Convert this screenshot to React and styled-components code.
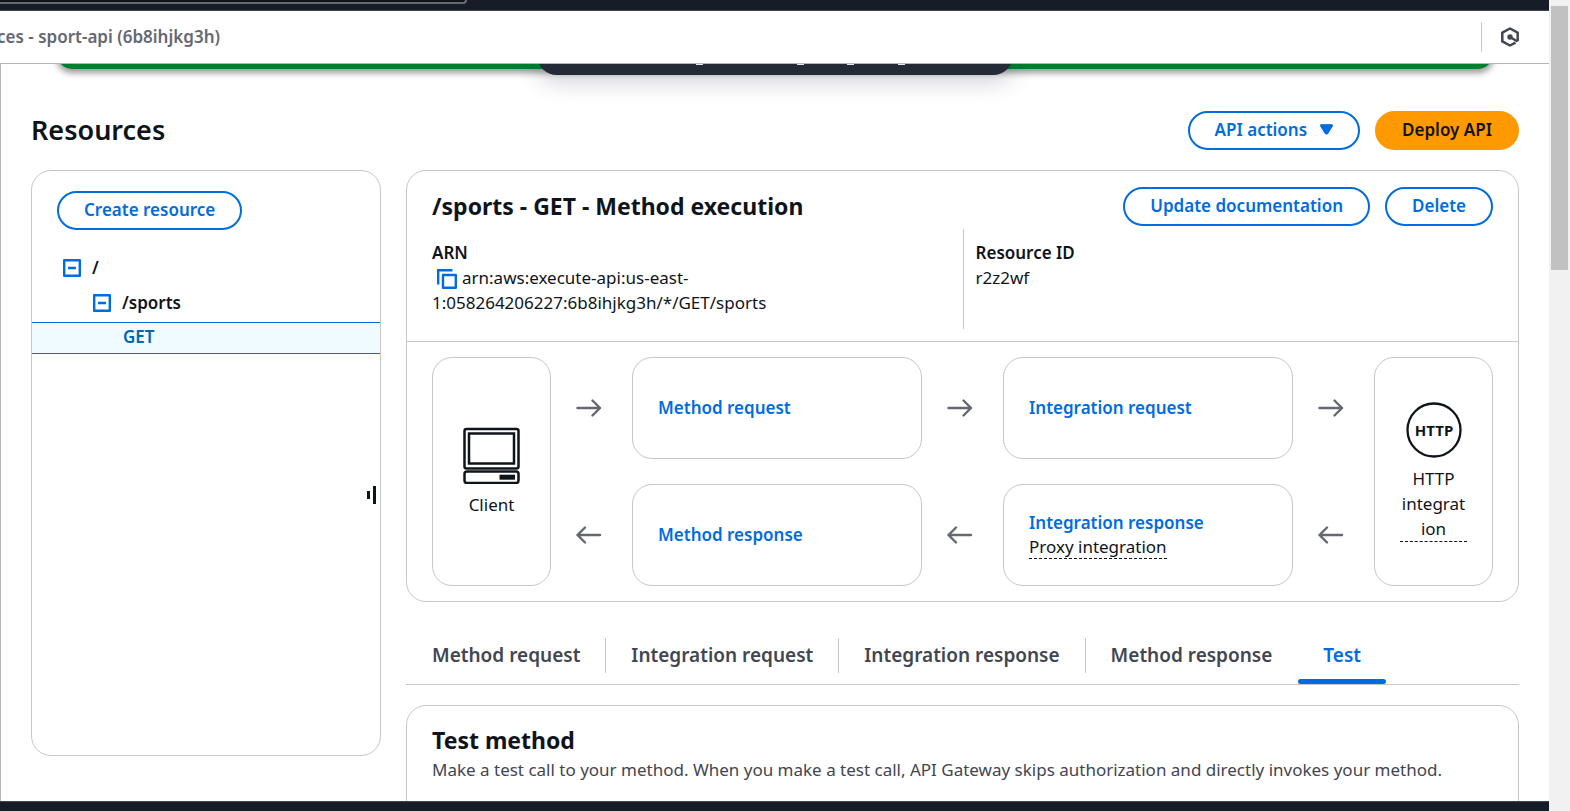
import React from 'react';
import styled, { createGlobalStyle } from 'styled-components';

const ink = '#0f141a';
const link = '#006ce0';
const line = '#c6c6cd';
const night = '#161d26';

const GlobalStyle = createGlobalStyle`
  *, *::before, *::after { box-sizing: border-box; }
  body { margin: 0; overflow: hidden; }
  h1, h2, p, ul, dl, dt, dd { margin: 0; padding: 0; }
  body, button {
    font-family: "Noto Sans", "Open Sans", sans-serif;
    font-size: 17px;
    line-height: 25px;
    color: ${ink};
  }
`;

const Screen = styled.div`
  display: grid;
  grid-template-columns: minmax(0, 1fr) 21px;
  height: 100vh;
  background: #fff;
`;

const Console = styled.div`
  display: grid;
  grid-template-rows: 11px 53px minmax(0, 1fr) 10px;
  min-height: 0;
`;

const ScrollTrack = styled.div`
  padding: 6px 2px;
  background: #f1f1f1;
`;

const ScrollThumb = styled.div`
  height: 33%;
  background: #c1c1c1;
`;

const GlobalNav = styled.header`
  background: ${night};
  border-bottom: 1px solid #424650;
`;

const SearchEdge = styled.div`
  width: 31%;
  max-width: 467px;
  height: 4px;
  background: ${ink};
  border: solid #656871;
  border-width: 0 2px 2px 0;
  border-bottom-right-radius: 6px;
`;

const ServiceBar = styled.div`
  display: flex;
  align-items: center;
  justify-content: space-between;
  padding-right: 29px;
  background: #fff;
  border-bottom: 1px solid #b4b4bb;
`;

const Crumb = styled.nav`
  display: flex;
  justify-content: flex-end;
  width: 220px;
  padding-bottom: 2px;
  overflow: hidden;
  white-space: nowrap;
  font-weight: 600;
  color: #656871;
`;

const ServiceTools = styled.div`
  display: flex;
  align-items: center;
  height: 30px;
  padding-left: 18px;
  border-left: 1px solid ${line};
`;

const IconButton = styled.button`
  display: inline-flex;
  padding: 0;
  border: 0;
  background: none;
  color: ${(p) => p.$color || link};
  vertical-align: ${(p) => p.$align || 'baseline'};
  margin: ${(p) => p.$margin || 0};
`;

const Main = styled.main`
  position: relative;
  min-height: 0;
  overflow: hidden;
  padding: 47px 30px 0;
  border-left: 1px solid #b4b4bb;
`;

const FlashEdge = styled.div`
  position: absolute;
  top: -30px;
  left: 56px;
  right: 56px;
  height: 35px;
  background: #00802f;
  border-radius: 15px;
  box-shadow: 0 3px 6px 1px rgba(0, 0, 0, 0.4);
`;

const ToastEdge = styled.div`
  position: absolute;
  top: -39px;
  left: 50%;
  width: 476px;
  height: 50px;
  margin-left: -238px;
  background: #232b37;
  border-radius: 20px;
  box-shadow: 0 6px 24px rgba(15, 20, 40, 0.2);
`;

const ToastMarks = styled.svg`
  position: absolute;
  top: 39px;
  left: 0;
`;

const TitleRow = styled.div`
  display: flex;
  align-items: center;
  justify-content: space-between;
  margin-bottom: 20px;
`;

const PageTitle = styled.h1`
  padding-bottom: 2px;
  font-size: 27px;
  line-height: 37px;
  font-weight: 650;
`;

const SectionTitle = styled.h2`
  padding-bottom: 2px;
  font-size: 23px;
  line-height: 30px;
  font-weight: 700;
`;

const Actions = styled.div`
  display: flex;
  gap: 15px;
`;

const Button = styled.button`
  display: inline-flex;
  align-items: center;
  gap: 13px;
  height: 39px;
  padding: 0 25px 2px;
  border: 2px solid ${(p) => (p.$primary ? '#ff9900' : link)};
  border-radius: 20px;
  background: ${(p) => (p.$primary ? '#ff9900' : '#fff')};
  color: ${(p) => (p.$primary ? ink : link)};
  font-weight: 600;
  white-space: nowrap;
`;

const Split = styled.div`
  display: grid;
  grid-template-columns: 350px minmax(0, 1fr);
  gap: 25px;
  align-items: start;
`;

const Panel = styled.section`
  border: 1px solid ${line};
  border-radius: 20px;
  background: #fff;
`;

const ResourcePanel = styled(Panel)`
  position: relative;
  min-height: 586px;
  padding-top: 20px;
`;

const PanelTools = styled.div`
  padding: 0 25px;
  margin-bottom: 20px;
`;

const Tree = styled.ul`
  list-style: none;
`;

const TreeRow = styled.li`
  display: flex;
  align-items: center;
  gap: 11px;
  height: 35px;
  padding-left: ${(p) => 31 + p.$level * 30}px;
  font-weight: 600;
`;

const SelectedRow = styled(TreeRow)`
  height: 32px;
  margin-top: 2px;
  padding-bottom: 3px;
  background: #f0fbff;
  border: solid ${link};
  border-width: 1px 0;
`;

const TreeLink = styled.a`
  color: #0066ad;
  text-decoration: none;
`;

const ResizeHandle = styled.button`
  position: absolute;
  top: 315px;
  right: 4px;
  display: flex;
  align-items: center;
  gap: 3px;
  height: 18px;
  padding: 0;
  border: 0;
  background: none;
`;

const HandleBar = styled.span`
  width: 3px;
  height: ${(p) => p.$size}px;
  background: ${ink};
`;

const Detail = styled.div`
  min-width: 0;
`;

const PanelHead = styled.div`
  padding: 16px 25px 12px;
  border-bottom: 1px solid ${line};
`;

const HeadRow = styled.div`
  display: flex;
  align-items: center;
  justify-content: space-between;
  margin-bottom: 3px;
`;

const Facts = styled.dl`
  display: grid;
  grid-template-columns: 1fr 1fr;
`;

const Fact = styled.div`
  min-height: 100px;
  padding: 11px 12px;
  border-left: 1px solid ${line};

  &:first-child {
    padding-left: 0;
    border-left: 0;
  }
`;

const FactLabel = styled.dt`
  font-weight: 600;
`;

const FactValue = styled.dd`
  max-width: 350px;
  overflow-wrap: break-word;
`;

const Flow = styled.div`
  display: grid;
  grid-template-columns: 119px 81px minmax(0, 1fr) 81px minmax(0, 1fr) 81px 119px;
  grid-template-rows: 102px 102px;
  row-gap: 25px;
  padding: 15px 25px;
`;

const FlowBox = styled.div`
  display: flex;
  flex-direction: column;
  align-items: flex-start;
  justify-content: center;
  padding: 0 25px 2px;
  border: 1px solid ${line};
  border-radius: 20px;
`;

const Endpoint = styled(FlowBox)`
  grid-column: ${(p) => p.$column};
  grid-row: 1 / span 2;
  align-items: stretch;
  gap: 8px;
  padding-bottom: 0;
  text-align: center;

  > svg { align-self: center; }
`;

const FlowArrow = styled.svg`
  align-self: center;
  margin-left: 25px;
`;

const FlowLink = styled.a`
  color: ${link};
  font-weight: 600;
  text-decoration: none;
`;

const Hint = styled.span`
  border-bottom: 1px dashed ${ink};
  line-height: ${(p) => (p.$tight ? 23 : 25)}px;
  overflow-wrap: anywhere;
`;

const Tabs = styled.div`
  display: flex;
  height: 48px;
  margin: 35px 0 20px;
  border-bottom: 1px solid ${line};
`;

const Tab = styled.button`
  position: relative;
  display: flex;
  align-items: flex-start;
  padding: 1px 25px 0 26px;
  border: 0;
  background: none;
  font-size: 19px;
  line-height: 34px;
  font-weight: 600;
  white-space: nowrap;
  color: ${(p) => (p['aria-selected'] ? link : '#424650')};

  & + &::before {
    content: '';
    position: absolute;
    left: 0;
    top: 1px;
    width: 1px;
    height: 35px;
    background: ${line};
  }

  &[aria-selected='true']::after {
    content: '';
    position: absolute;
    left: 1px;
    right: 0;
    bottom: 0;
    height: 5px;
    border-radius: 3px;
    background: ${link};
  }
`;

const TestPanel = styled(Panel)`
  min-height: 240px;
  padding: 19px 25px;
`;

const Description = styled.p`
  color: #424650;
`;

const Footer = styled.footer`
  background: ${night};
  border-top: 1px solid #424650;
`;

const AssistIcon = () => (
  <svg width="20" height="20" viewBox="0 0 20 20" fill="none" stroke="currentColor" strokeWidth="2.5" strokeLinejoin="round">
    <path d="M17.700 14.200V5.600L10 1.500 2.300 5.600v8.800l7.700 4.100 5.500-2.900" />
    <path d="M10 10l7.500 4.500" />
    <circle cx="10" cy="10" r="2.700" fill="currentColor" stroke="none" />
  </svg>
);

const CopyIcon = () => (
  <svg width="20" height="20" viewBox="0 0 20 20" fill="none" stroke="currentColor" strokeWidth="2.400">
    <path d="M15.500 1.200H1.200v14.300" />
    <path d="M6 6h12.800v12.800H6z" strokeLinejoin="round" />
  </svg>
);

const CollapseIcon = () => (
  <svg width="18" height="18" viewBox="0 0 18 18" fill="none" stroke="currentColor" strokeWidth="2.400" strokeLinejoin="round">
    <path d="M1.200 1.200h15.600v15.600H1.200zM5 9h8" />
  </svg>
);

const CaretIcon = () => (
  <svg width="13" height="11" viewBox="0 0 13 11" fill="currentColor" stroke="currentColor" strokeWidth="1" strokeLinejoin="round">
    <path d="M0.700 0.700h11.600v1.500L7.500 10h-2L0.700 2.200z" />
  </svg>
);

const Arrow = ({ back }) => (
  <FlowArrow width="26" height="18" viewBox="0 0 26 18" fill="none" stroke="#656871" strokeWidth="2.400" strokeLinecap="round" strokeLinejoin="round">
    <path d={back ? 'M24 9H1.500M9 1.500L1.500 9 9 16.500' : 'M1.500 9H24M16.500 1.500L24 9l-7.500 7.500'} />
  </FlowArrow>
);

const ClientIcon = () => (
  <svg width="57" height="57" viewBox="0 0 57 57" fill="none" stroke={ink} strokeWidth="2.500">
    <rect x="1.500" y="2" width="54" height="39.500" rx="2" />
    <rect x="6" y="6.500" width="45" height="30" />
    <rect x="1.500" y="44.500" width="54" height="11.500" rx="2.500" />
    <path d="M36.500 50.200h15.500" strokeWidth="5" />
  </svg>
);

const HttpIcon = () => (
  <svg width="56" height="56" viewBox="0 0 56 56">
    <circle cx="28" cy="28" r="26.500" fill="none" stroke={ink} strokeWidth="2.300" />
    <text x="28" y="33.500" textAnchor="middle" fontFamily="Noto Sans, sans-serif" fontSize="15" fontWeight="700" fill={ink}>
      HTTP
    </text>
  </svg>
);

const tabs = ['Method request', 'Integration request', 'Integration response', 'Method response', 'Test'];

export default function App() {
  return (
    <Screen>
      <GlobalStyle />
      <Console>
        <GlobalNav>
          <SearchEdge />
        </GlobalNav>
        <ServiceBar>
          <Crumb aria-label="Breadcrumb">Resources - sport-api (6b8ihjkg3h)</Crumb>
          <ServiceTools>
            <IconButton $color="#424650" aria-label="Assistant">
              <AssistIcon />
            </IconButton>
          </ServiceTools>
        </ServiceBar>
        <Main>
          <FlashEdge />
          <ToastEdge>
            <ToastMarks width="476" height="2" aria-hidden="true">
              <path d="M159 0.500h7M260 0.500h7M310 0.500h7M361 0.500h7" stroke="#e8e9ec" strokeWidth="1" />
            </ToastMarks>
          </ToastEdge>
          <TitleRow>
            <PageTitle>Resources</PageTitle>
            <Actions>
              <Button>
                API actions <CaretIcon />
              </Button>
              <Button $primary>Deploy API</Button>
            </Actions>
          </TitleRow>
          <Split>
            <ResourcePanel>
              <PanelTools>
                <Button>Create resource</Button>
              </PanelTools>
              <Tree>
                <TreeRow $level={0}>
                  <IconButton aria-label="Collapse /">
                    <CollapseIcon />
                  </IconButton>
                  /
                </TreeRow>
                <TreeRow $level={1}>
                  <IconButton aria-label="Collapse /sports">
                    <CollapseIcon />
                  </IconButton>
                  /sports
                </TreeRow>
                <SelectedRow $level={2}>
                  <TreeLink href="#get">GET</TreeLink>
                </SelectedRow>
              </Tree>
              <ResizeHandle aria-label="Resize panel">
                <HandleBar $size={8} />
                <HandleBar $size={18} />
              </ResizeHandle>
            </ResourcePanel>
            <Detail>
              <Panel>
                <PanelHead>
                  <HeadRow>
                    <SectionTitle>/sports - GET - Method execution</SectionTitle>
                    <Actions>
                      <Button>Update documentation</Button>
                      <Button>Delete</Button>
                    </Actions>
                  </HeadRow>
                  <Facts>
                    <Fact>
                      <FactLabel>ARN</FactLabel>
                      <FactValue>
                        <IconButton aria-label="Copy ARN" $align="-5px" $margin="0 5px 0 5px">
                          <CopyIcon />
                        </IconButton>
                        arn:aws:execute-api:us-east-1:058264206227:6b8ihjkg3h/*/GET/sports
                      </FactValue>
                    </Fact>
                    <Fact>
                      <FactLabel>Resource ID</FactLabel>
                      <FactValue>r2z2wf</FactValue>
                    </Fact>
                  </Facts>
                </PanelHead>
                <Flow>
                  <Endpoint $column={1}>
                    <ClientIcon />
                    <span>Client</span>
                  </Endpoint>
                  <Arrow />
                  <FlowBox>
                    <FlowLink href="#method-request">Method request</FlowLink>
                  </FlowBox>
                  <Arrow />
                  <FlowBox>
                    <FlowLink href="#integration-request">Integration request</FlowLink>
                  </FlowBox>
                  <Arrow />
                  <Endpoint $column={7}>
                    <HttpIcon />
                    <Hint>HTTP integration</Hint>
                  </Endpoint>
                  <Arrow back />
                  <FlowBox>
                    <FlowLink href="#method-response">Method response</FlowLink>
                  </FlowBox>
                  <Arrow back />
                  <FlowBox>
                    <FlowLink href="#integration-response">Integration response</FlowLink>
                    <Hint $tight>Proxy integration</Hint>
                  </FlowBox>
                  <Arrow back />
                </Flow>
              </Panel>
              <Tabs role="tablist">
                {tabs.map((name) => (
                  <Tab key={name} role="tab" aria-selected={name === 'Test'}>
                    {name}
                  </Tab>
                ))}
              </Tabs>
              <TestPanel>
                <SectionTitle>Test method</SectionTitle>
                <Description>
                  Make a test call to your method. When you make a test call, API Gateway skips authorization and directly
                  invokes your method.
                </Description>
              </TestPanel>
            </Detail>
          </Split>
        </Main>
        <Footer />
      </Console>
      <ScrollTrack>
        <ScrollThumb />
      </ScrollTrack>
    </Screen>
  );
}
